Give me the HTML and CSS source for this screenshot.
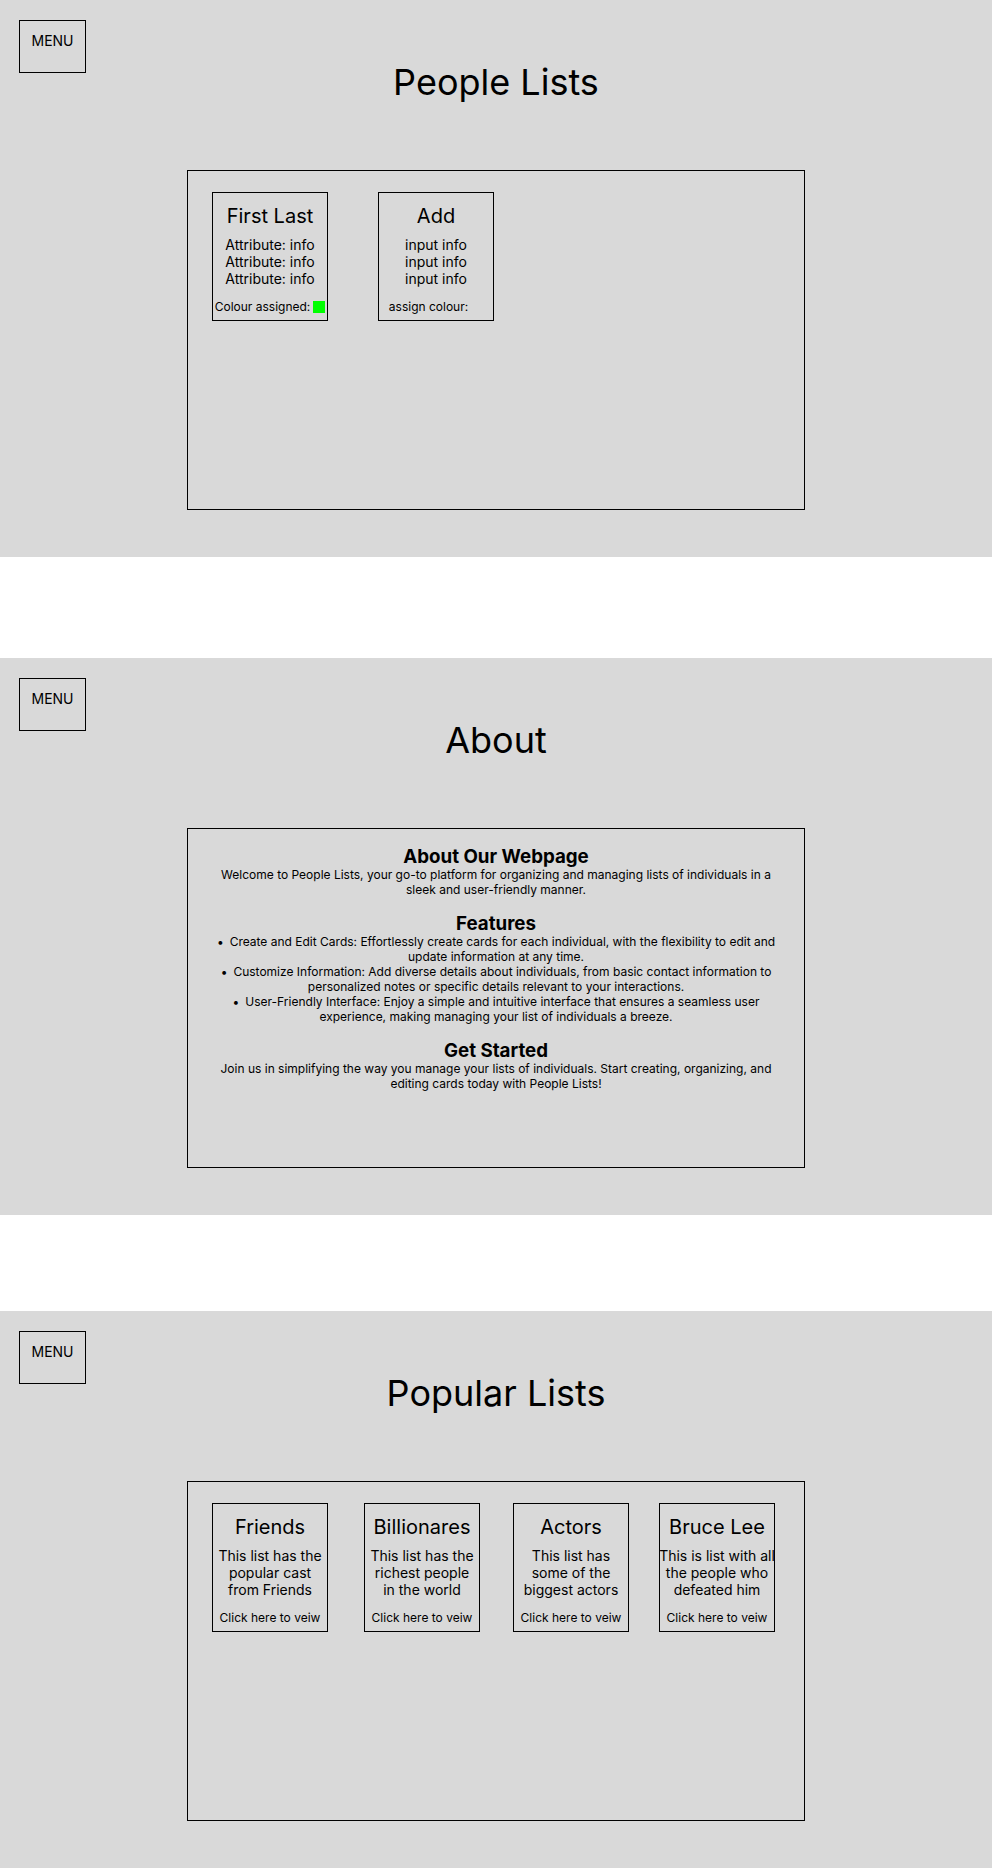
FILE: index.html
```html
<!DOCTYPE html>
<html lang="en">
<head>
<meta charset="utf-8">
<title>People Lists</title>
<link rel="stylesheet" href="styles.css">
</head>
<body>
<section class="panel">
  <header class="panel-head">
    <div class="menu">MENU</div>
    <h1 class="panel-title">People Lists</h1>
  </header>
  <div class="board board-people">
    <div class="card">
      <h2 class="card-title">First Last</h2>
      <p class="card-text">Attribute: info<br>Attribute: info<br>Attribute: info</p>
      <div class="card-foot"><span>Colour assigned:</span><span class="swatch swatch-green"></span></div>
    </div>
    <div class="card">
      <h2 class="card-title">Add</h2>
      <p class="card-text">input info<br>input info<br>input info</p>
      <div class="card-foot"><span>assign colour:</span><span class="swatch"></span></div>
    </div>
  </div>
</section>

<section class="panel panel-about">
  <header class="panel-head">
    <div class="menu">MENU</div>
    <h1 class="panel-title">About</h1>
  </header>
  <div class="board board-about">
    <h3 class="about-heading">About Our Webpage</h3>
    <p class="about-text">Welcome to People Lists, your go-to platform for organizing and managing lists of individuals in a sleek and user-friendly manner.</p>
    <h3 class="about-heading">Features</h3>
    <ul class="about-list">
      <li>Create and Edit Cards: Effortlessly create cards for each individual, with the flexibility to edit and update information at any time.</li>
      <li>Customize Information: Add diverse details about individuals, from basic contact information to personalized notes or specific details relevant to your interactions.</li>
      <li>User-Friendly Interface: Enjoy a simple and intuitive interface that ensures a seamless user experience, making managing your list of individuals a breeze.</li>
    </ul>
    <h3 class="about-heading">Get Started</h3>
    <p class="about-text">Join us in simplifying the way you manage your lists of individuals. Start creating, organizing, and editing cards today with People Lists!</p>
  </div>
</section>

<section class="panel panel-popular">
  <header class="panel-head">
    <div class="menu">MENU</div>
    <h1 class="panel-title">Popular Lists</h1>
  </header>
  <div class="board board-popular">
    <div class="card">
      <h2 class="card-title">Friends</h2>
      <p class="card-text">This list has the<br>popular cast<br>from Friends</p>
      <div class="card-foot"><span>Click here to veiw</span></div>
    </div>
    <div class="card">
      <h2 class="card-title">Billionares</h2>
      <p class="card-text">This list has the<br>richest people<br>in the world</p>
      <div class="card-foot"><span>Click here to veiw</span></div>
    </div>
    <div class="card">
      <h2 class="card-title">Actors</h2>
      <p class="card-text">This list has<br>some of the<br>biggest actors</p>
      <div class="card-foot"><span>Click here to veiw</span></div>
    </div>
    <div class="card">
      <h2 class="card-title">Bruce Lee</h2>
      <p class="card-text card-text-wide">This is list with all<br>the people who<br>defeated him</p>
      <div class="card-foot"><span>Click here to veiw</span></div>
    </div>
  </div>
</section>
</body>
</html>
```
FILE: styles.css
```css
* {
  box-sizing: border-box;
}

body {
  margin: 0;
  background: #ffffff;
  color: #000000;
  font-family: Inter, "Noto Sans", "Liberation Sans", sans-serif;
}

.panel {
  height: 557px;
  background: #d9d9d9;
  padding-top: 20px;
  display: flex;
  flex-direction: column;
  align-items: center;
}

.panel-about {
  margin-top: 101px;
}

.panel-popular {
  margin-top: 96px;
}

.panel-head {
  width: 100%;
  display: grid;
  grid-template-columns: 1fr auto 1fr;
  align-items: start;
}

.menu {
  justify-self: start;
  margin-left: 19px;
  width: 67px;
  height: 53px;
  border: 1px solid #000000;
  padding-top: 11px;
  text-align: center;
  font-size: 14px;
  line-height: 17px;
}

.panel-title {
  margin: 40px 0 0;
  font-size: 36px;
  font-weight: 400;
  line-height: normal;
}

.board {
  margin-top: 66px;
  width: 618px;
  height: 340px;
  border: 1px solid #000000;
}

.board-people,
.board-popular {
  display: flex;
  align-items: flex-start;
  padding: 21px 24px;
}

.board-people .card + .card {
  margin-left: 50px;
}

.board-popular .card:nth-child(2) {
  margin-left: 36px;
}

.board-popular .card:nth-child(3) {
  margin-left: 33px;
}

.board-popular .card:nth-child(4) {
  margin-left: 30px;
}

.card {
  flex-shrink: 0;
  width: 116px;
  height: 129px;
  border: 1px solid #000000;
  padding: 11px 0 6px;
  display: flex;
  flex-direction: column;
  align-items: center;
  text-align: center;
}

.card-title {
  margin: 0;
  font-size: 20px;
  font-weight: 400;
  line-height: 24px;
  white-space: nowrap;
}

.card-text {
  margin: 8px 0 0;
  font-size: 14px;
  line-height: 17px;
  white-space: nowrap;
}

.card-text-wide {
  margin-left: -1px;
  margin-right: -1px;
}

.card-foot {
  margin-top: auto;
  display: flex;
  align-items: center;
  gap: 3px;
  font-size: 12px;
  line-height: 15px;
  white-space: nowrap;
}

.swatch {
  width: 12px;
  height: 12px;
}

.swatch-green {
  background: #00ff00;
}

.board-about {
  padding: 18px 22px;
  text-align: center;
}

.about-heading {
  margin: 17px 0 0;
  font-size: 18.72px;
  font-weight: 700;
  line-height: 20px;
}

.about-heading:first-child {
  margin-top: 0;
}

.about-text {
  margin: 0;
  font-size: 12px;
  line-height: 15px;
}

.about-list {
  margin: 0;
  padding: 0;
  list-style: none;
  font-size: 12px;
  line-height: 15px;
}

.about-list li::before {
  content: "\2022";
  margin-right: 6px;
}
```
